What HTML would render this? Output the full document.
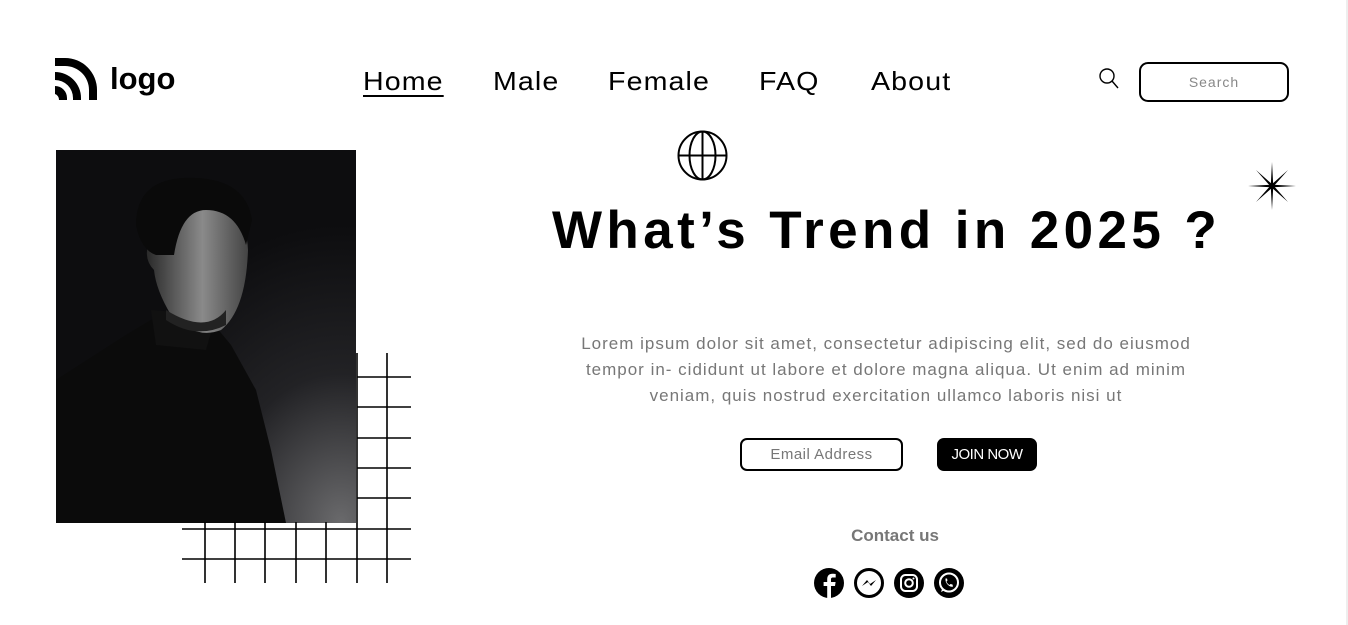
<!DOCTYPE html>
<html><head><meta charset="utf-8"><style>
*{margin:0;padding:0;box-sizing:border-box}
body{width:1348px;height:625px;background:#fff;position:relative;overflow:hidden;font-family:"Liberation Sans",sans-serif;color:#000}
.a{position:absolute}
.nav a{position:absolute;top:66px;font-size:26px;color:#000;text-decoration:none;letter-spacing:1px;transform:scaleX(1.1);transform-origin:left}
.sb{position:absolute;right:0;top:0;width:2px;height:625px;background:#eee}
</style></head><body>
<div class="sb"></div>
<svg class="a" style="left:55px;top:58px" width="44" height="42" viewBox="0 0 44 42">
<path d="M0 0 H10 A32 32 0 0 1 42 32 V42 H34 V32 A24 24 0 0 0 10 8 H0Z" fill="#000"/>
<path d="M0 14 A26 26 0 0 1 26 40 V42 H18 V40 A18 18 0 0 0 0 22Z" fill="#000"/>
<path d="M0 28 A12 12 0 0 1 12 40 V42 H4 A6 6 0 0 0 0 36Z" fill="#000"/>
</svg>
<div class="a" style="left:110px;top:61px;font-size:31px;font-weight:bold;letter-spacing:0px">logo</div>
<div class="nav">
<a style="left:363px;text-decoration:underline;text-underline-offset:5px;text-decoration-thickness:2px">Home</a>
<a style="left:493px">Male</a>
<a style="left:608px">Female</a>
<a style="left:759px">FAQ</a>
<a style="left:871px">About</a>
</div>
<svg class="a" style="left:1098px;top:68px" width="22" height="24" viewBox="0 0 22 24"><circle cx="9" cy="8" r="7" fill="none" stroke="#000" stroke-width="1.4"/><path d="M14 13 L20 20" stroke="#000" stroke-width="1.4"/></svg>
<div class="a" style="left:1139px;top:62px;width:150px;height:40px;border:2px solid #000;border-radius:9px;text-align:center;line-height:36px;font-size:14px;color:#888;letter-spacing:1px">Search</div>
<svg class="a" style="left:56px;top:150px" width="300" height="373" viewBox="0 0 300 373">
<defs><radialGradient id="g" cx="0.95" cy="1" r="0.8"><stop offset="0" stop-color="#6a6a6c"/><stop offset="0.5" stop-color="#222225"/><stop offset="1" stop-color="#0d0d0f"/></radialGradient>
<linearGradient id="f" x1="0" y1="0" x2="1" y2="0"><stop offset="0" stop-color="#2a2a2a"/><stop offset="0.55" stop-color="#8a8a8a"/><stop offset="1" stop-color="#444"/></linearGradient></defs>
<rect width="300" height="373" fill="url(#g)"/>
<path d="M0 230 L70 185 L95 170 L150 165 L175 195 L200 240 L215 300 L230 373 L0 373Z" fill="#0b0b0b"/>
<path d="M95 160 L100 195 L150 200 L160 165 Z" fill="#111"/>
<path d="M110 60 Q115 40 150 45 Q190 55 192 100 Q190 160 165 180 Q140 190 115 165 Q100 140 98 120 Q88 110 92 95 Q100 90 105 100Z" fill="url(#f)"/>
<path d="M110 170 Q140 190 170 175 L170 160 Q150 185 110 160Z" fill="#222"/>
<path d="M80 75 Q80 25 140 28 Q190 30 196 70 L190 95 Q180 60 150 60 Q125 60 118 105 L100 105 Q85 100 80 75Z" fill="#0a0a0a"/>
</svg>
<svg class="a" style="left:180px;top:352px" width="232" height="233" viewBox="180 352 232 233" stroke="#000" stroke-width="1.6">
<path d="M205 522V583M235 522V583M265 522V583M296 522V583M326 522V583M357 353V583M387 353V583M357 377H411M357 407H411M357 438H411M357 468H411M357 498H411M182 529H411M182 559H411"/>
</svg>
<svg class="a" style="left:677px;top:130px" width="51" height="51" viewBox="0 0 51 51" fill="none" stroke="#000" stroke-width="2"><circle cx="25.5" cy="25.5" r="24"/><ellipse cx="25.5" cy="25.5" rx="13" ry="24"/><path d="M25.5 1.5V49.5M1.5 25.5H49.5"/></svg>
<svg class="a" style="left:1248px;top:162px" width="48" height="48" viewBox="0 0 48 48"><path d="M24 0 L25.2 22.8 L48 24 L25.2 25.2 L24 48 L22.8 25.2 L0 24 L22.8 22.8Z" fill="#000"/><path d="M8 8 L25 23 L40 40 L23 25Z M40 8 L25 25 L8 40 L23 23Z" fill="#000"/></svg>
<div class="a" style="left:552px;top:200px;font-size:53px;font-weight:bold;letter-spacing:4.4px;white-space:nowrap">What’s Trend in 2025 ?</div>
<div class="a" style="left:566px;top:331px;width:640px;text-align:center;font-size:17px;line-height:26px;color:#777;letter-spacing:1px">Lorem ipsum dolor sit amet, consectetur adipiscing elit, sed do eiusmod tempor in- cididunt ut labore et dolore magna aliqua. Ut enim ad minim veniam, quis nostrud exercitation ullamco laboris nisi ut</div>
<div class="a" style="left:740px;top:438px;width:163px;height:33px;border:2px solid #000;border-radius:7px;text-align:center;line-height:29px;font-size:15px;color:#777;letter-spacing:0.5px">Email Address</div>
<div class="a" style="left:937px;top:438px;width:100px;height:33px;background:#000;border-radius:7px;text-align:center;line-height:33px;font-size:15px;color:#fff;letter-spacing:-0.5px">JOIN NOW</div>
<div class="a" style="left:820px;top:526px;width:150px;text-align:center;font-size:17px;font-weight:bold;color:#777">Contact us</div>
<svg class="a" style="left:813px;top:567px" width="152" height="32" viewBox="0 0 152 32">
<circle cx="16" cy="16" r="15" fill="#000"/><path d="M18 31V19h4l.6-4H18v-2.5c0-1.2.4-2 2-2h2.7V7c-.5-.1-1.8-.2-3.3-.2-3.2 0-5.2 1.900-5.2 5.4V15h-3.6v4h3.6v12Z" fill="#fff"/>
<circle cx="56" cy="16" r="13.5" fill="none" stroke="#000" stroke-width="3"/><path d="M49 19 L54 13 L57 17 L63 13 L58 19 L55 15Z" fill="#000"/>
<circle cx="96" cy="16" r="15" fill="#000"/><rect x="88" y="8" width="16" height="16" rx="4.5" fill="none" stroke="#fff" stroke-width="2"/><circle cx="96" cy="16" r="3.8" fill="none" stroke="#fff" stroke-width="2"/><circle cx="100.5" cy="11.5" r="1" fill="#fff"/>
<circle cx="136" cy="16" r="15" fill="#000"/><circle cx="136" cy="15.5" r="9" fill="none" stroke="#fff" stroke-width="2"/><path d="M128 25 L129.5 21 L132 23Z" fill="#fff"/><path d="M132.5 11.5 Q132 15 135 18 Q138 20.5 140 19.5 L139.5 17.5 L137.5 17 L136.5 18 Q134 16.5 133.5 14.5 L134.5 13.5 L134 11.5Z" fill="#fff"/>
</svg>
</body></html>
